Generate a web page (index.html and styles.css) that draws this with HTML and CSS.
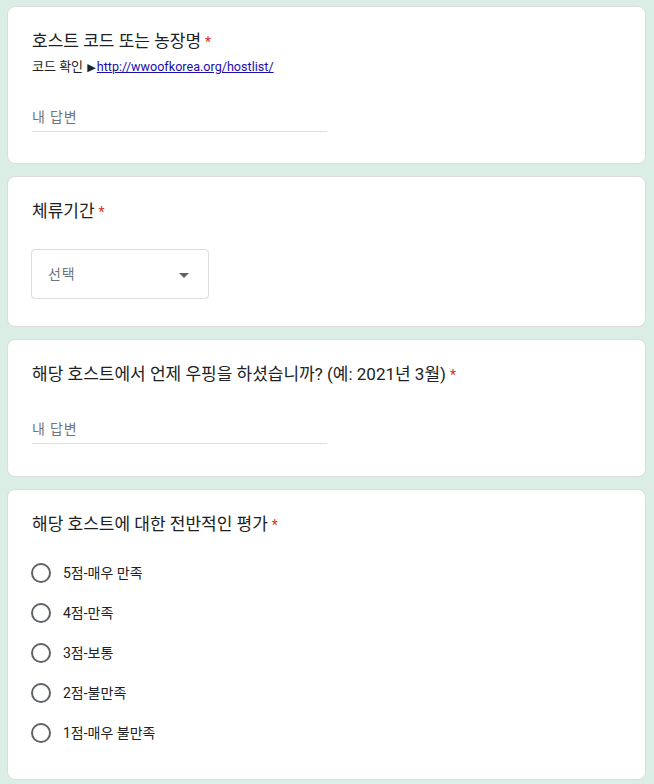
FILE: index.html
```html
<!DOCTYPE html>
<html lang="ko">
<head>
<meta charset="utf-8">
<link rel="stylesheet" href="styles.css">
</head>
<body>
<div class="page">
  <section class="card card-1">
    <div class="q-title">호스트 코드 또는 농장명<span class="req">*</span></div>
    <div class="q-desc">코드 확인 <span class="tri">▶</span><a class="link" href="#">http://wwoofkorea.org/hostlist/</a></div>
    <div class="answer">내 답변</div>
  </section>

  <section class="card card-2">
    <div class="q-title">체류기간<span class="req">*</span></div>
    <div class="select">
      <span class="select-text">선택</span>
      <svg class="caret" width="10" height="5" viewBox="0 0 10 5"><path d="M0 0h10L5 5z" fill="#5f6368"/></svg>
    </div>
  </section>

  <section class="card card-3">
    <div class="q-title">해당 호스트에서 언제 우핑을 하셨습니까? (예: 2021년 3월)<span class="req">*</span></div>
    <div class="answer answer-3">내 답변</div>
  </section>

  <section class="card card-4">
    <div class="q-title">해당 호스트에 대한 전반적인 평가<span class="req">*</span></div>
    <div class="options">
      <div class="option"><span class="radio"></span><span class="opt-label">5점-매우 만족</span></div>
      <div class="option"><span class="radio"></span><span class="opt-label">4점-만족</span></div>
      <div class="option"><span class="radio"></span><span class="opt-label">3점-보통</span></div>
      <div class="option"><span class="radio"></span><span class="opt-label">2점-불만족</span></div>
      <div class="option"><span class="radio"></span><span class="opt-label">1점-매우 불만족</span></div>
    </div>
  </section>
</div>
</body>
</html>
```

FILE: styles.css
```css
html, body {
  margin: 0;
  padding: 0;
  background: #dbeee6;
}
body {
  font-family: Roboto, "Noto Sans CJK KR", sans-serif;
  color: #202124;
}
.page {
  padding: 6px 0 0 7px;
  width: 639px;
  display: flex;
  flex-direction: column;
  gap: 12px;
}
.card {
  background: #fff;
  border: 1px solid #dadce0;
  border-radius: 8px;
  padding: 22px 24px 31px 24px;
}
.q-title {
  font-size: 17px;
  line-height: 24px;
}
.req {
  color: #d93025;
  margin-left: 4px;
  font-size: 14px;
}
.q-desc {
  margin-top: 4px;
  font-size: 13px;
  line-height: 18px;
}
.tri {
  font-family: "DejaVu Sans", sans-serif;
  font-size: 11px;
  margin-left: 1px;
  margin-right: 1px;
}
.link {
  font-size: 12.6px;
  color: #1a0dab;
  text-decoration: underline;
}
.answer {
  margin-top: 28px;
  width: 295px;
  font-size: 14px;
  letter-spacing: 0.8px;
  line-height: 24px;
  color: #70757a;
  padding-bottom: 2px;
  border-bottom: 1px solid #e0e0e0;
}
.answer-3 {
  margin-top: 30px;
}
.card-2 {
  padding-bottom: 27px;
}
.card-3 {
  padding-bottom: 32px;
}
.select {
  margin-top: 25px;
  margin-left: -1px;
  border: 1px solid #dadce0;
  border-radius: 4px;
  display: flex;
  align-items: center;
  justify-content: space-between;
  padding: 0 19px 0 16px;
  box-sizing: border-box;
  width: 178px;
  height: 50px;
}
.select-text {
  font-size: 14px;
  letter-spacing: 0.8px;
  color: #70757a;
  position: relative;
  top: -1px;
}
.caret {
  display: block;
  position: relative;
  top: 1px;
}
.card-4 {
  padding-bottom: 26px;
}
.options {
  margin-top: 16px;
  display: flex;
  flex-direction: column;
}
.option {
  height: 40px;
  display: flex;
  align-items: center;
}
.radio {
  width: 20px;
  height: 20px;
  box-sizing: border-box;
  border: 2px solid #5f6368;
  border-radius: 50%;
  margin-left: -1px;
  flex: none;
}
.opt-label {
  margin-left: 12px;
  font-size: 14px;
  line-height: 20px;
}
```
